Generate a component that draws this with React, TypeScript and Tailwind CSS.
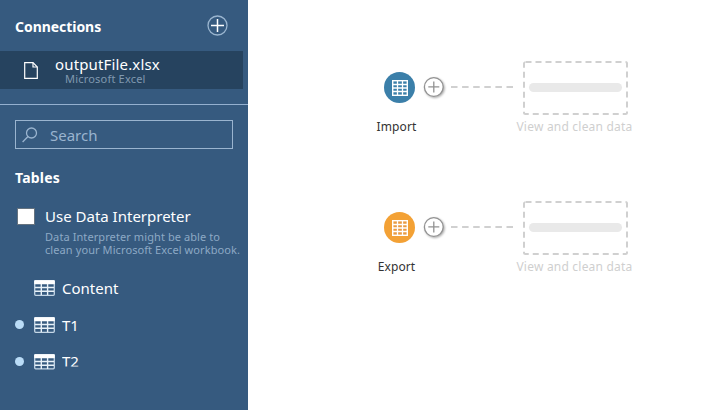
import React from "react";

function TableIcon({ clipped }: { clipped?: boolean }) {
  return (
    <svg width="21" height="16" viewBox="0 0 21 16" className="shrink-0">
      <rect x="0.7" y="0.6" width="19.6" height={clipped ? 14.2 : 14.7} rx="1" fill="none" stroke="#c4d6e6" strokeWidth="1.3" />
      <rect x="0.2" y="0.2" width="20.6" height="4" rx="0.8" fill="#fff" />
      <path d="M1 7.5H20M1 11.2H20M7.3 4V15M13.6 4V15" stroke="#e8f1f8" strokeWidth="1.4" />
    </svg>
  );
}

function TableRow({ name, dot, clipped }: { name: string; dot?: boolean; clipped?: boolean }) {
  return (
    <div className="flex h-[37px] items-center pl-[15px]">
      <div className={`size-[9px] shrink-0 rounded-full ${dot ? "bg-[#badcf7]" : ""}`} />
      <div className="ml-[10px] flex">
        <TableIcon clipped={clipped} />
      </div>
      <span className={`ml-[7px] text-[15px] leading-5 ${clipped ? "mb-[2px] [clip-path:inset(0_0_4px_0)]" : ""}`}>{name}</span>
    </div>
  );
}

function Flow({ name, color, cell }: { name: string; color: string; cell: string }) {
  return (
    <div className="flex h-[140px] items-start">
      <div className="flex w-[60px] flex-col items-center">
        <svg width="31" height="31" viewBox="0 0 31 31" className="mt-[11px]">
          <circle cx="15.5" cy="15.5" r="15.5" fill={color} />
          <rect x="8.7" y="8.7" width="14.6" height="14.6" fill={cell} stroke="#fff" strokeWidth="1.4" />
          <path d="M9 12.5H23M9 16H23M9 19.5H23M13.5 9V23M18.5 9V23" stroke="#fff" strokeWidth="1.3" />
        </svg>
        <span className="mt-[15px] -ml-[5px] text-[12px] leading-[18px] tracking-[0.1px] text-[#333]">{name}</span>
      </div>
      <svg width="29" height="26" viewBox="0 0 29 26" className="mt-[14px] -ml-[8px] shrink-0 drop-shadow-[1px_1px_1px_#aaa]">
        <circle cx="12.8" cy="12" r="9.4" fill="#fff" stroke="#929292" strokeWidth="1.3" />
        <path d="M7.3 11.9H18.3M12.8 6.4V17.4" stroke="#929292" strokeWidth="1.3" />
      </svg>
      <svg width="64" height="4" viewBox="0 0 64 4" className="mt-[24px] shrink-0">
        <path d="M1 2H64" stroke="#d0d0d0" strokeWidth="2.2" strokeDasharray="6.5 4.6" />
      </svg>
      <div className="flex w-[122px] flex-col items-center">
        <svg width="105" height="54" viewBox="0 0 105 54">
          <rect x="1" y="1" width="103" height="52" rx="1.5" fill="none" stroke="#d0d0d0" strokeWidth="2" strokeDasharray="6 4" />
          <rect x="6" y="22" width="93" height="9" rx="4.5" fill="#e9e9e9" />
        </svg>
        <span className="mt-[3px] -ml-px text-[12px] leading-[18px] tracking-[0.21px] whitespace-nowrap text-[#cfcfcf]">View and clean data</span>
      </div>
    </div>
  );
}

export default function App() {
  return (
    <div className="flex h-[410px] w-[714px] overflow-hidden bg-white font-['Noto_Sans',sans-serif]">
      <aside className="h-full w-[248px] shrink-0 bg-[#365a7f] text-white">
        <header className="flex h-[51px] items-center justify-between pr-5 pl-[15px]">
          <h2 className="mt-[2px] text-[14px] font-bold tracking-[-0.05px]">Connections</h2>
          <svg width="21" height="21" viewBox="0 0 21 21" fill="none">
            <circle cx="10.5" cy="10.5" r="9.5" stroke="#9ab5cf" strokeWidth="1.3" />
            <path d="M4 10.5H17M10.5 4V17" stroke="#fff" strokeWidth="1.5" />
          </svg>
        </header>
        <div className="flex h-[38px] w-[243px] items-center bg-[#26435f] pl-[24px]">
          <svg width="14" height="17" viewBox="0 0 14 17" fill="none" stroke="#fff" strokeWidth="1.2">
            <path d="M.7.7H9L13.3 5V16.3H.7Z" />
            <path d="M9 .7V5H13.3" />
          </svg>
          <div className="mt-[2px] ml-[17px] flex flex-col">
            <span className="h-[16px] text-[15px] leading-[16px] tracking-[0.15px]">outputFile.xlsx</span>
            <span className="ml-[10px] h-[14px] text-[11px] leading-[14px] tracking-[0.2px] text-[#8099b0]">Microsoft Excel</span>
          </div>
        </div>
        <div className="mt-[15px] h-px bg-[#94b0cf]" />
        <div className="mt-[15px] ml-[15px] flex h-[29px] w-[218px] items-center border border-[#9ab4cf] pl-[6px] text-[#9ab4cf]">
          <svg width="16" height="16" viewBox="0 0 16 16" fill="none" stroke="currentColor" strokeWidth="1.3">
            <circle cx="9.5" cy="6" r="5" />
            <path d="M6 9.5L.6 15" />
          </svg>
          <span className="mt-px ml-[12px] text-[15px]">Search</span>
        </div>
        <h2 className="mt-[19px] ml-[15px] text-[14px] leading-5 font-bold tracking-[0.2px]">Tables</h2>
        <div className="mt-[18px] flex pl-[17px]">
          <div className="mt-[2px] h-[17px] w-[18px] shrink-0 border border-[#66737f] bg-white" />
          <div className="ml-[10px]">
            <div className="text-[15px] leading-5">Use Data Interpreter</div>
            <div className="mt-[4px] text-[11px] tracking-[0.09px] whitespace-nowrap text-[#8da9c5]">
              <p className="h-[13px] leading-[13px]">Data Interpreter might be able to</p>
              <p className="h-[13px] leading-[13px]">clean your Microsoft Excel workbook.</p>
            </div>
          </div>
        </div>
        <div className="mt-[13px]">
          <TableRow name="Content" />
          <TableRow name="T1" dot />
          <TableRow name="T2" dot clipped />
        </div>
      </aside>
      <main className="pt-[61px] pl-[121px]">
        <Flow name="Import" color="#3b7fa9" cell="#3b7fa9" />
        <Flow name="Export" color="#f3a135" cell="#e99b42" />
      </main>
    </div>
  );
}
